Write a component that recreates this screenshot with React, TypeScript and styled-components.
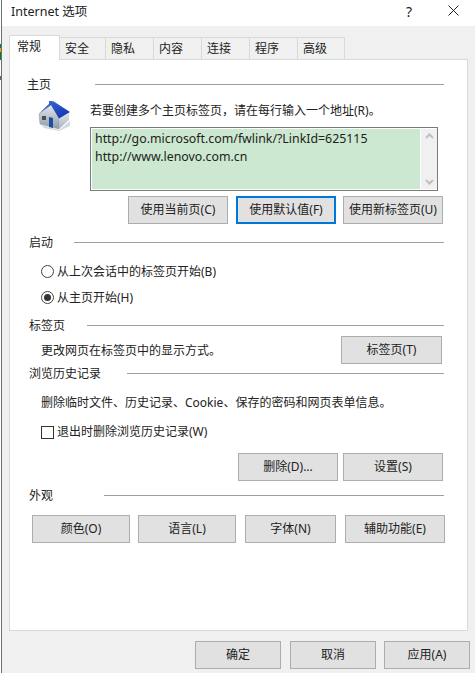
import React from "react";
import styled, { createGlobalStyle } from "styled-components";

const Global = createGlobalStyle`
  html, body { margin: 0; padding: 0; background: #fff; }
  body {
    font-family: "Noto Sans", "Noto Sans CJK SC", sans-serif;
    font-size: 12px;
    color: #1a1a1a;
  }
  * { box-sizing: border-box; }
`;

const Desktop = styled.div`
  width: 475px;
  height: 673px;
  overflow: hidden;
  display: flex;
  background: linear-gradient(#fff 0 44px, #0c7a2a 44px 48px, #e0b000 48px 52px, #0c7a2a 52px 60px, #fff 60px 76px, #666 76px 80px, #fff 80px);
  padding-left: 1px;
`;

const Dialog = styled.div`
  flex: 1;
  min-width: 0;
  border-left: 1px solid #6e6e6e;
  background: #f0f0f0;
  display: flex;
  flex-direction: column;
`;

const TitleBar = styled.div`
  height: 26px;
  flex: none;
  background: #fff;
  display: flex;
  align-items: center;
  padding-left: 9px;
`;

const Title = styled.div`
  flex: 1;
  font-size: 12.5px;
  line-height: 20px;
  margin-top: -3px;
  color: #222;
`;

const HelpGlyph = styled.div`
  width: 14px;
  text-align: center;
  font-size: 14px;
  line-height: 20px;
  margin-top: -3px;
  color: #222;
  margin-right: 32px;
`;

const CloseButton = styled.div`
  display: flex;
  margin-right: 16px;
  margin-top: -6px;
`;

const TabStrip = styled.div`
  height: 33px;
  flex: none;
  display: flex;
  align-items: flex-end;
  padding-left: 7px;
`;

const Tab = styled.div<{ $w: number; $active?: boolean }>`
  width: ${(p) => p.$w}px;
  height: ${(p) => (p.$active ? 25 : 22)}px;
  margin-bottom: ${(p) => (p.$active ? -1 : 0)}px;
  background: ${(p) => (p.$active ? "#fff" : "#f0f0f0")};
  border: 1px solid #d9d9d9;
  border-bottom: ${(p) => (p.$active ? "none" : "0")};
  border-left: ${(p) => (p.$active ? "1px solid #d9d9d9" : "none")};
  padding: 1px 0 0 ${(p) => (p.$active ? 7 : 5)}px;
  line-height: 20px;
  position: relative;
  z-index: ${(p) => (p.$active ? 1 : 0)};
  color: #222;
`;

const Panel = styled.div`
  height: 572px;
  flex: none;
  margin-left: 7px;
  margin-right: 7px;
  background: #fff;
  border: 1px solid #d9d9d9;
  padding: 16px 23px 0 17px;
`;

const Header = styled.div<{ $indent?: number; $mt?: number }>`
  display: flex;
  align-items: center;
  height: 16px;
  padding-left: ${(p) => p.$indent ?? 2}px;
  margin-top: ${(p) => p.$mt ?? 0}px;
`;

const Legend = styled.div<{ $w: number }>`
  width: ${(p) => p.$w}px;
  height: 16px;
  line-height: 18px;
  white-space: nowrap;
  color: #222;
`;

const Rule = styled.div`
  flex: 1;
  height: 1px;
  background: #a0a0a0;
`;

const HomeBody = styled.div`
  display: flex;
  padding-left: 10px;
`;

const IconColumn = styled.div`
  width: 53px;
  padding-top: 8px;
  flex: none;
`;

const HomeColumn = styled.div`
  flex: 1;
  padding-top: 10px;
  min-width: 0;
`;

const Line = styled.div<{ $mt?: number; $ml?: number }>`
  height: 16px;
  line-height: 18px;
  white-space: nowrap;
  margin-top: ${(p) => p.$mt ?? 0}px;
  margin-left: ${(p) => p.$ml ?? 0}px;
  color: #222;
`;

const UrlBox = styled.div`
  margin-top: 9px;
  width: 348px;
  height: 64px;
  border: 1px solid #7a7a7a;
  padding: 1px 0 1px 1px;
  display: flex;
  background: #fff;
`;

const UrlText = styled.div`
  width: 328px;
  background: #cde8d0;
  padding: 1px 3px;
  font-size: 12.35px;
  line-height: 17.5px;
  color: #222;
`;

const ScrollBar = styled.div`
  margin-left: 1px;
  flex: 1;
  background: #f0f0f0;
  display: flex;
  flex-direction: column;
  align-items: center;
  justify-content: space-between;
  padding: 4px 0;
`;

const ButtonRow = styled.div<{ $mt: number; $ml?: number; $mr?: number; $end?: boolean }>`
  display: flex;
  justify-content: ${(p) => (p.$end ? "flex-end" : "flex-start")};
  margin-top: ${(p) => p.$mt}px;
  margin-left: ${(p) => p.$ml ?? 0}px;
  margin-right: ${(p) => p.$mr ?? 0}px;
`;

const Button = styled.button<{ $w: number; $focus?: boolean; $ml?: number }>`
  width: ${(p) => p.$w}px;
  height: 28px;
  flex: none;
  margin: 0 0 0 ${(p) => p.$ml ?? 0}px;
  padding: 0;
  background: #e1e1e1;
  border: ${(p) => (p.$focus ? "2px solid #0078d7" : "1px solid #adadad")};
  font: inherit;
  color: #222;
  line-height: 16px;
  white-space: nowrap;
`;

const OptionRow = styled.div<{ $mt: number }>`
  display: flex;
  align-items: center;
  height: 16px;
  margin-top: ${(p) => p.$mt}px;
  margin-left: 14px;
  gap: 3px;
  color: #222;
`;

const Radio = styled.span<{ $on?: boolean }>`
  width: 13px;
  height: 13px;
  border-radius: 50%;
  border: 1px solid #444;
  flex: none;
  display: flex;
  align-items: center;
  justify-content: center;
  background: #fff;
  &::after {
    content: "";
    display: ${(p) => (p.$on ? "block" : "none")};
    width: 7px;
    height: 7px;
    border-radius: 50%;
    background: #333;
  }
`;

const CheckBox = styled.span`
  width: 13px;
  height: 13px;
  border: 1px solid #333;
  flex: none;
  background: #fff;
`;

const CheckLabel = styled.span`
  margin-top: -2px;
`;

const TabsRow = styled.div`
  display: flex;
  align-items: center;
  justify-content: space-between;
  height: 28px;
  margin-top: 3px;
  margin-left: 14px;
  margin-right: 2px;
`;

const Footer = styled.div`
  display: flex;
  justify-content: flex-end;
  padding: 10px 5px 0 0;
`;

const House = () => (
  <svg width="34" height="32" viewBox="37 100 34 32">
    <defs>
      <linearGradient id="roof" x1="0" y1="0" x2="1" y2="1">
        <stop offset="0" stopColor="#3c6fe0" />
        <stop offset="1" stopColor="#0f2fa8" />
      </linearGradient>
      <linearGradient id="wall" x1="0" y1="0" x2="0" y2="1">
        <stop offset="0" stopColor="#e6eaef" />
        <stop offset="1" stopColor="#8f9aa6" />
      </linearGradient>
      <linearGradient id="side" x1="0" y1="0" x2="0" y2="1">
        <stop offset="0" stopColor="#dfe4ea" />
        <stop offset="1" stopColor="#aab2ba" />
      </linearGradient>
    </defs>
    <path d="M41 125 L59 130 L70 121 L70 126 L59 131 L44 128 Z" fill="#d5d8da" />
    <path d="M39 114 L51 105 L59 118 L59 129 L40 124 Z" fill="url(#wall)" stroke="#8b97a3" strokeWidth="0.5" />
    <path d="M59 118 L69 113 L69 120 L59 129 Z" fill="url(#side)" />
    <path d="M49 101 L52 101 L52 104 L49 104 Z" fill="#3a63c8" />
    <path d="M39 113.5 L51 102 L53 101 L70 112 L59 118.5 L51 105 Z" fill="url(#roof)" />
    <path d="M42 116 L46 116 L46 120 L42 120 Z" fill="#46505c" />
    <path d="M49 117 L53 118 L53 128 L49 127 Z" fill="#1c4f9c" />
  </svg>
);

const Chevron = ({ up }: { up?: boolean }) => (
  <svg width="9" height="6" viewBox="0 0 9 6">
    <path d={up ? "M1 5 L4.5 1.5 L8 5" : "M1 1 L4.5 4.5 L8 1"} fill="none" stroke="#c0c0c0" strokeWidth="2" />
  </svg>
);

const tabs: [string, number][] = [
  ["安全", 46],
  ["隐私", 48],
  ["内容", 48],
  ["连接", 48],
  ["程序", 48],
  ["高级", 47],
];

export default function App() {
  return (
    <Desktop>
      <Global />
      <Dialog>
        <TitleBar>
          <Title>Internet 选项</Title>
          <HelpGlyph>?</HelpGlyph>
          <CloseButton>
            <svg width="11" height="11" viewBox="0 0 11 11">
              <path d="M0.5 0.5 L10.5 10.5 M10.5 0.5 L0.5 10.5" stroke="#222" strokeWidth="1" fill="none" />
            </svg>
          </CloseButton>
        </TitleBar>
        <TabStrip>
          <Tab $w={51} $active>常规</Tab>
          {tabs.map(([t, w]) => (
            <Tab key={t} $w={w}>{t}</Tab>
          ))}
        </TabStrip>
        <Panel>
          <Header $indent={0}>
            <Legend $w={68}>主页</Legend>
            <Rule />
          </Header>
          <HomeBody>
            <IconColumn>
              <House />
            </IconColumn>
            <HomeColumn>
              <Line>若要创建多个主页标签页，请在每行输入一个地址(R)。</Line>
              <UrlBox>
                <UrlText>
                  http://go.microsoft.com/fwlink/?LinkId=625115
                  <br />
                  http://www.lenovo.com.cn
                </UrlText>
                <ScrollBar>
                  <Chevron up />
                  <Chevron />
                </ScrollBar>
              </UrlBox>
              <ButtonRow $mt={5} $ml={38}>
                <Button $w={100}>使用当前页(C)</Button>
                <Button $w={100} $ml={8} $focus>使用默认值(F)</Button>
                <Button $w={100} $ml={7}>使用新标签页(U)</Button>
              </ButtonRow>
            </HomeColumn>
          </HomeBody>

          <Header $mt={10}>
            <Legend $w={45}>启动</Legend>
            <Rule />
          </Header>
          <OptionRow $mt={13}>
            <Radio />
            从上次会话中的标签页开始(B)
          </OptionRow>
          <OptionRow $mt={10}>
            <Radio $on />
            从主页开始(H)
          </OptionRow>

          <Header $mt={12}>
            <Legend $w={58}>标签页</Legend>
            <Rule />
          </Header>
          <TabsRow>
            <Line>更改网页在标签页中的显示方式。</Line>
            <Button $w={101}>标签页(T)</Button>
          </TabsRow>

          <Header $mt={1}>
            <Legend $w={98}>浏览历史记录</Legend>
            <Rule />
          </Header>
          <Line $mt={13} $ml={14}>删除临时文件、历史记录、Cookie、保存的密码和网页表单信息。</Line>
          <OptionRow $mt={14}>
            <CheckBox />
            <CheckLabel>退出时删除浏览历史记录(W)</CheckLabel>
          </OptionRow>
          <ButtonRow $mt={13} $end $mr={1}>
            <Button $w={100}>删除(D)...</Button>
            <Button $w={100} $ml={5}>设置(S)</Button>
          </ButtonRow>

          <Header $mt={6}>
            <Legend $w={75}>外观</Legend>
            <Rule />
          </Header>
          <ButtonRow $mt={12} $ml={5}>
            <Button $w={98}>颜色(O)</Button>
            <Button $w={98} $ml={8}>语言(L)</Button>
            <Button $w={91} $ml={9}>字体(N)</Button>
            <Button $w={100} $ml={9}>辅助功能(E)</Button>
          </ButtonRow>
        </Panel>
        <Footer>
          <Button $w={86}>确定</Button>
          <Button $w={86} $ml={9}>取消</Button>
          <Button $w={86} $ml={8}>应用(A)</Button>
        </Footer>
      </Dialog>
    </Desktop>
  );
}
